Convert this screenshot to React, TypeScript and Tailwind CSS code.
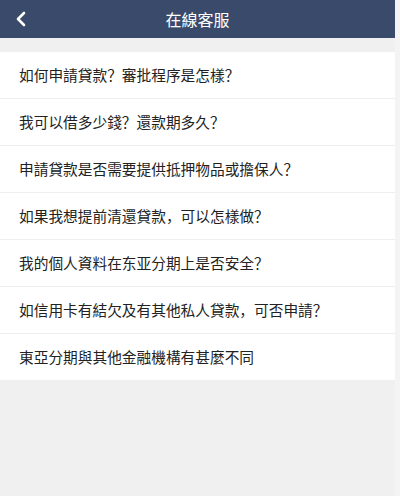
const questions = [
  "如何申請貸款？審批程序是怎樣？",
  "我可以借多少錢？還款期多久？",
  "申請貸款是否需要提供抵押物品或擔保人？",
  "如果我想提前清還貸款，可以怎樣做？",
  "我的個人資料在东亚分期上是否安全？",
  "如信用卡有結欠及有其他私人貸款，可否申請？",
  "東亞分期與其他金融機構有甚麼不同",
];

export default function App() {
  return (
    <div
      className="flex h-[496px] w-full bg-[#f0f0f0]"
      style={{ fontFamily: '"Noto Sans CJK SC", "Noto Sans", sans-serif' }}
    >
      <div className="flex w-[395px] flex-col">
        <header className="relative flex h-[38px] items-center justify-center bg-[#3a4a6b]">
          <button className="absolute left-[14px] top-[11px] text-white" aria-label="back">
            <svg width="14" height="16" viewBox="0 0 14 16" fill="none">
              <path d="M10 2L4 8l6 6" stroke="white" strokeWidth="2.6" strokeLinecap="round" strokeLinejoin="round" />
            </svg>
          </button>
          <h1 className="text-[16px] leading-none text-white">在線客服</h1>
        </header>

        <ul className="mt-[14px] bg-white">
          {questions.map((q, i) => (
            <li
              key={i}
              className={`flex h-[46px] items-center px-[19px] text-[14.7px] text-[#222] ${
                i < questions.length - 1 ? "box-content border-b border-[#eeeeee]" : ""
              }`}
            >
              {q}
            </li>
          ))}
        </ul>
      </div>
      <div className="w-[5px] bg-[#f4f4f4]" />
    </div>
  );
}
